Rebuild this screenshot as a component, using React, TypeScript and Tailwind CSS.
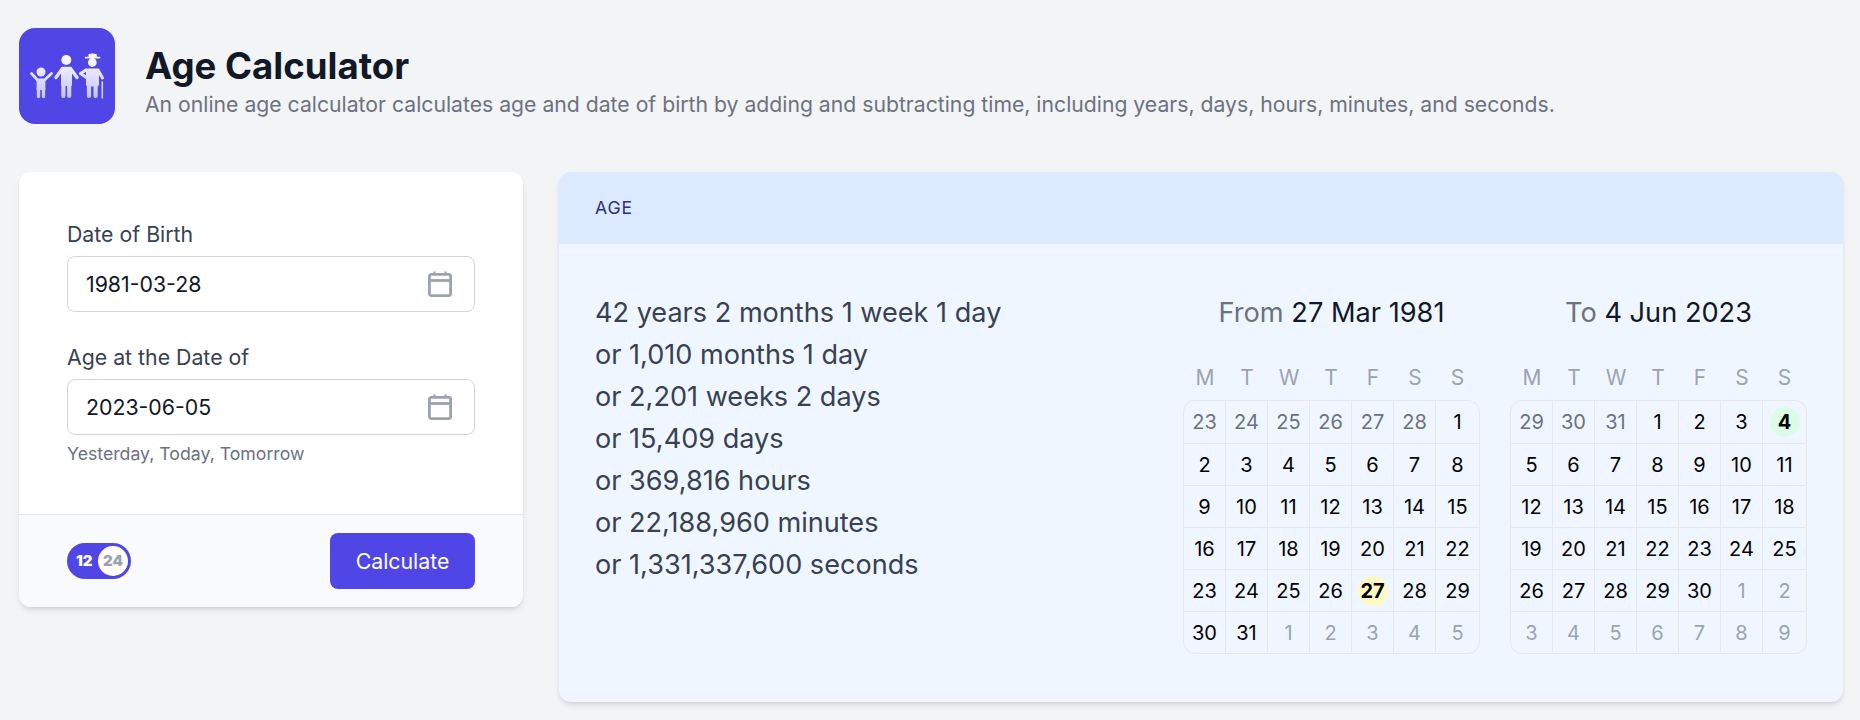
import React from "react";

type Day = { n: number; tone?: "prev" | "next"; mark?: "yellow" | "green" };

const range = (a: number, b: number, tone?: "prev" | "next"): Day[] => {
  const out: Day[] = [];
  for (let i = a; i <= b; i++) out.push({ n: i, tone });
  return out;
};

const fromDays: Day[] = [
  ...range(23, 28, "prev"),
  ...range(1, 26),
  { n: 27, mark: "yellow" },
  ...range(28, 31),
  ...range(1, 5, "next"),
];

const toDays: Day[] = [
  ...range(29, 31, "prev"),
  ...range(1, 3),
  { n: 4, mark: "green" },
  ...range(5, 30),
  ...range(1, 9, "next"),
];

const lines = [
  "42 years 2 months 1 week 1 day",
  "or 1,010 months 1 day",
  "or 2,201 weeks 2 days",
  "or 15,409 days",
  "or 369,816 hours",
  "or 22,188,960 minutes",
  "or 1,331,337,600 seconds",
];

function FamilyIcon() {
  return (
    <svg width="96" height="96" viewBox="0 0 96 96" fill="none">
      <defs>
        <linearGradient id="fam" x1="0" y1="25" x2="0" y2="72" gradientUnits="userSpaceOnUse">
          <stop offset="0" stopColor="#ffffff" />
          <stop offset="1" stopColor="#c4c0f6" />
        </linearGradient>
      </defs>
      <g fill="url(#fam)" stroke="url(#fam)" strokeLinecap="round" strokeLinejoin="round">
        <circle cx="22" cy="44" r="4.5" stroke="none" />
        <path d="M12.5 45.5L18.5 52H25.5L32.5 45.5" strokeWidth="2.8" fill="none" />
        <rect x="17.6" y="51" width="8.8" height="11" stroke="none" />
        <path d="M19.5 60V68.5M24.5 60V68.5" strokeWidth="3.4" />

        <circle cx="47.3" cy="32" r="5" stroke="none" />
        <path d="M37 49.5L43.5 40.5H51.5L58 49.5" strokeWidth="3.4" fill="none" />
        <rect x="42" y="39" width="11" height="19" rx="1" stroke="none" />
        <path d="M44.4 56V68M50.2 56V68" strokeWidth="4.2" />

        <circle cx="73.3" cy="34.5" r="4.4" stroke="none" />
        <path d="M66.5 29.6H80.5" strokeWidth="1.7" />
        <path d="M69.5 29.5V26.3Q73.5 24.6 77.8 26.3V29.5Z" stroke="none" />
        <rect x="67" y="40.5" width="13" height="18" rx="2" stroke="none" />
        <path d="M67 42L61.5 45.5L67.5 49.5" strokeWidth="3.2" fill="none" />
        <path d="M79 42L83.5 50" strokeWidth="3" fill="none" />
        <path d="M70 56V68M76.6 56V68" strokeWidth="4.2" />
        <path d="M83.3 54V70" strokeWidth="1.6" />
      </g>
    </svg>
  );
}

function CalendarIcon() {
  return (
    <svg width="24" height="26" viewBox="0 0 24 26" fill="none" stroke="#9ca3af" strokeWidth="2.8">
      <rect x="1.4" y="3.4" width="21.2" height="21.2" rx="2" />
      <path d="M1.4 9.5H22.6" />
      <path d="M6.5 0.5V3.5M17.5 0.5V3.5" strokeWidth="2.2" />
    </svg>
  );
}

function DateField({ value }: { value: string }) {
  return (
    <div className="flex h-[56px] items-center justify-between rounded-lg border border-[#d1d5db] bg-white pl-[18px] pr-[22px] text-[21.3px] text-[#111827]">
      <span className="pt-px">{value}</span>
      <CalendarIcon />
    </div>
  );
}

function Calendar({ label, date, days }: { label: string; date: string; days: Day[] }) {
  return (
    <div className="w-[297px]">
      <div className="h-[36px] text-center text-[27.2px] leading-[36px] text-[#6b7280]">
        {label} <span className="text-[#111827]">{date}</span>
      </div>
      <div className="mt-[30px] grid h-[34px] grid-cols-[repeat(6,42px)_43px] pl-px text-center text-[21px] leading-[34px] text-[#9ca3af]">
        {["M", "T", "W", "T", "F", "S", "S"].map((d, i) => (
          <div key={i}>{d}</div>
        ))}
      </div>
      <div className="mt-[5px] grid grid-cols-[repeat(6,42px)_43px] rounded-xl border border-[#e5e7eb] text-[20px]">
        {days.map((d, i) => {
          const lastRow = i >= 35;
          const firstRow = i < 7;
          const lastCol = i % 7 === 6;
          return (
            <div
              key={i}
              className={
                "flex items-center justify-center border-[#e5e7eb] " +
                (firstRow ? "h-[43px] " : lastRow ? "h-[41px] " : "h-[42px] ") +
                (lastRow ? "" : "border-b ") +
                (lastCol ? "" : "border-r ") +
                (d.tone === "prev" ? "text-[#6b7280]" : d.tone === "next" ? "text-[#9ca3af]" : "text-black")
              }
            >
              {d.mark ? (
                <span
                  className={
                    "flex h-[30px] w-[30px] items-center justify-center rounded-full font-bold " +
                    (d.mark === "yellow" ? "bg-[#fef9c3]" : "bg-[#dcfce7]")
                  }
                >
                  {d.n}
                </span>
              ) : (
                d.n
              )}
            </div>
          );
        })}
      </div>
    </div>
  );
}

export default function App() {
  return (
    <div className="h-[720px] overflow-hidden bg-[#f3f4f6] pl-[19px] pr-[17px] pt-[28px] font-[Inter,sans-serif]">
      <header className="flex gap-[30px]">
        <div className="h-[96px] w-[96px] rounded-2xl bg-[#4f46e5]">
          <FamilyIcon />
        </div>
        <div className="pt-[18px]">
          <h1 className="text-[36.6px] font-bold leading-[40px] text-[#111827]">Age Calculator</h1>
          <p className="mt-[2px] text-[21.2px] leading-[32px] text-[#6b7280]">
            An online age calculator calculates age and date of birth by adding and subtracting time, including years, days, hours, minutes, and seconds.
          </p>
        </div>
      </header>

      <main className="mt-[48px] flex items-start gap-[36px]">
        <section className="flex h-[435px] w-[504px] flex-col overflow-hidden rounded-xl bg-white shadow-md">
          <div className="flex-1 px-[48px] pt-[48px]">
            <div className="text-[21.3px] leading-[28px] text-[#374151]">Date of Birth</div>
            <div className="mt-[8px]">
              <DateField value="1981-03-28" />
            </div>
            <div className="mt-[31px] text-[21.3px] leading-[28px] text-[#374151]">Age at the Date of</div>
            <div className="mt-[8px]">
              <DateField value="2023-06-05" />
            </div>
            <div className="mt-[7px] text-[17.7px] leading-[24px] text-[#6b7280]">Yesterday, Today, Tomorrow</div>
          </div>
          <div className="flex h-[93px] items-center justify-between border-t border-[#e5e7eb] bg-[#f9fafb] px-[48px]">
            <div className="flex h-[36px] w-[64px] items-center justify-between rounded-full bg-[#4f46e5] pl-[9px] pr-[3px] text-[15px] font-black">
              <span className="text-white">12</span>
              <span className="flex h-[30px] w-[30px] items-center justify-center rounded-full bg-white text-[#9ca3af]">24</span>
            </div>
            <button className="h-[56px] w-[145px] rounded-lg bg-[#4f46e5] pt-px text-[21.3px] font-normal text-white">Calculate</button>
          </div>
        </section>

        <section className="h-[530px] flex-1 overflow-hidden rounded-xl bg-[#eff6ff] shadow-md">
          <div className="flex h-[72px] items-center bg-[#dbeafe] px-[36px] text-[17.7px] tracking-wider text-[#312e81]">AGE</div>
          <div className="flex items-start justify-between pl-[36px] pr-[36px] pt-[48px]">
            <div className="text-[27.1px] leading-[42px] text-[#374151]">
              {lines.map((l) => (
                <div key={l}>{l}</div>
              ))}
            </div>
            <div className="mt-[3px] flex gap-[30px]">
              <Calendar label="From" date="27 Mar 1981" days={fromDays} />
              <Calendar label="To" date="4 Jun 2023" days={toDays} />
            </div>
          </div>
        </section>
      </main>
    </div>
  );
}
